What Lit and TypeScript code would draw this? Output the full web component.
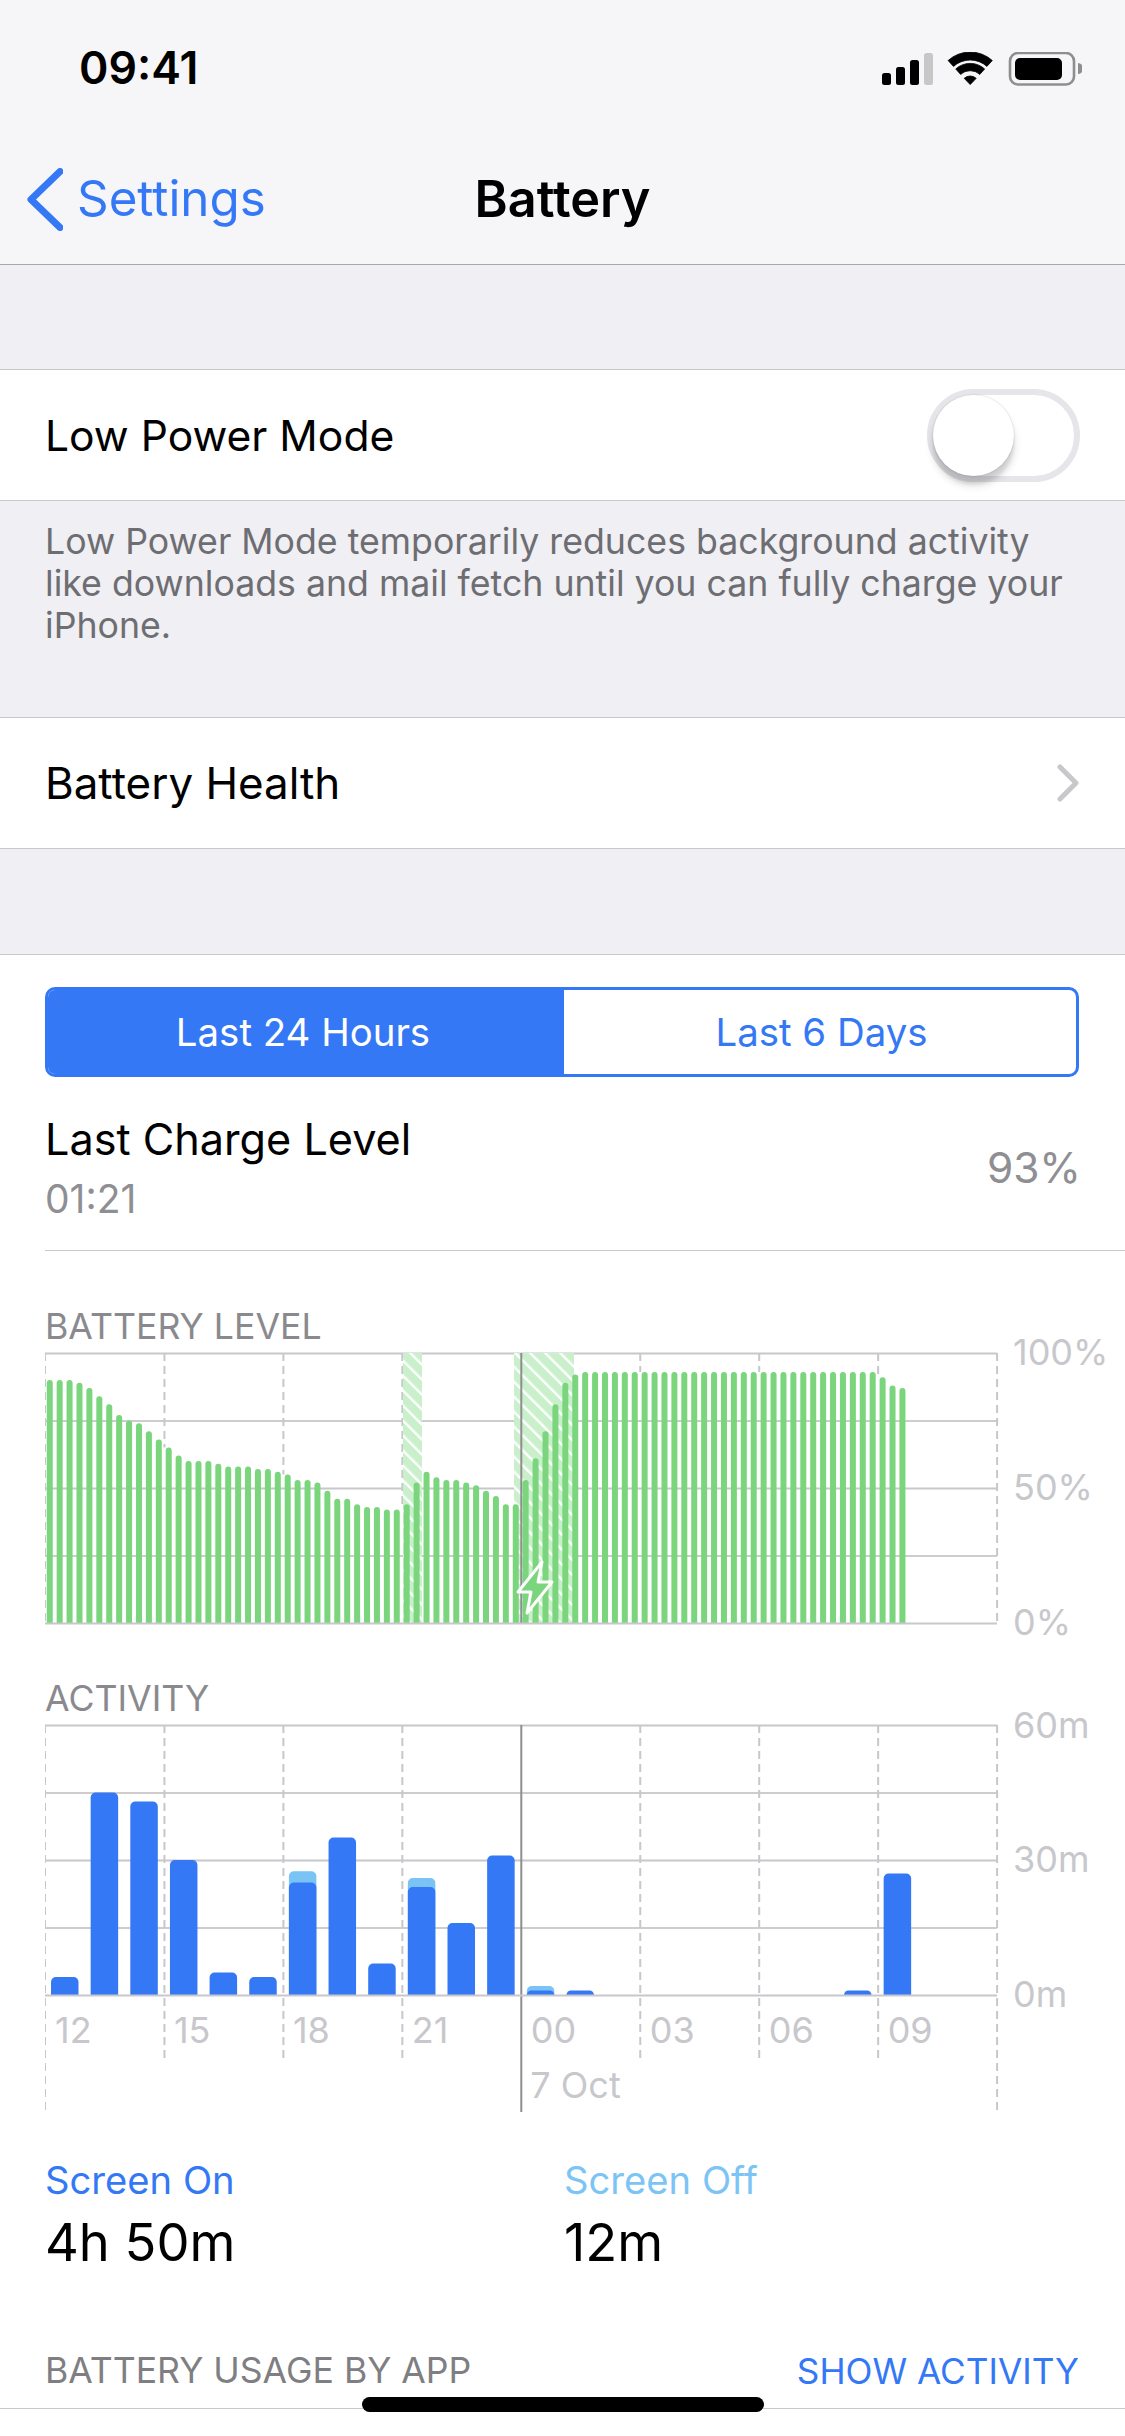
import { html, svg, css, LitElement } from "lit";
import { customElement } from "lit/decorators.js";

// battery percentage per 15 min slot, read off the graph
const LEVELS = [
  90, 90, 90, 89, 87, 84, 81, 77, 75, 74, 71, 68, 65, 62, 60, 60, 60, 59, 58, 58, 58, 57, 57, 56, 55, 53, 53, 52, 49,
  46, 46, 44, 43, 43, 42, 42, 44, 52, 56, 54, 53, 53, 52, 51, 49, 47, 44, 44, 53, 61, 71, 81, 89, 92,
  ...Array(30).fill(93),
  91, 88, 87,
];

// minutes per hour: [screen on, screen on + off]
const ACTIVITY: [number, number][] = [
  [4, 4], [45, 45], [43, 43], [30, 30], [5, 5], [4, 4], [25, 27.5], [35, 35], [7, 7], [24, 26], [16, 16], [31, 31],
  [1, 2], [1, 1], [0, 0], [0, 0], [0, 0], [0, 0], [0, 0], [0, 0], [1, 1], [27, 27],
];

const HOURS = ["12", "15", "18", "21", "00", "03", "06", "09"];
const LEFT = 45;
const RIGHT = 997;
const STEP = 118.95;
const GRID_X = Array.from({ length: 9 }, (_, i) => LEFT + 0.5 + i * STEP);
const LEVEL_BOTTOM = 1623;
const LEVEL_X = 46.75;
const LEVEL_STEP = 9.915;

// rounded-top column
const column = (x: number, w: number, top: number, bottom: number, r: number) => {
  const rr = Math.min(r, bottom - top);
  return `M${x} ${bottom}V${top + rr}A${rr} ${rr} 0 0 1 ${x + rr} ${top}H${x + w - rr}A${rr} ${rr} 0 0 1 ${x + w} ${top + rr}V${bottom}Z`;
};

// the hour guides of the level graph stop where the green columns begin
const levelGuideEnd = (x: number) => {
  const slot = Math.round((x - LEVEL_X - 3) / LEVEL_STEP);
  const level = LEVELS[slot];
  return level === undefined || slot < 1 ? LEVEL_BOTTOM : LEVEL_BOTTOM - level * 2.7;
};

@customElement("app-root")
export class AppRoot extends LitElement {
  static styles = css`
    :host {
      display: block;
      position: relative;
      height: 2436px;
      overflow: hidden;
      background: #fff;
      font-family: Inter, "Liberation Sans", sans-serif;
      color: #000;
    }

    .top {
      height: 264px;
      background: #f6f6f8;
      border-bottom: 1px solid #a9a9ab;
    }
    .status {
      display: flex;
      justify-content: space-between;
      padding: 42px 43px 0 79px;
      height: 125px;
      box-sizing: border-box;
    }
    .clock {
      font-size: 44.6px;
      line-height: 52px;
      font-weight: 600;
    }
    .status-icons {
      display: block;
      width: 200px;
      height: 34px;
      margin-top: 10px;
    }
    .nav {
      display: grid;
      grid-template-columns: 1fr auto 1fr;
      align-items: center;
      height: 64px;
      margin-top: 42px;
      padding-left: 27px;
      padding-right: 27px;
    }
    .back {
      display: flex;
      align-items: center;
      gap: 14px;
      color: #3478f6;
      font-size: 49.3px;
    }
    .back span,
    .title {
      position: relative;
      top: -1px;
    }
    .back svg {
      display: block;
      width: 36px;
      height: 63px;
    }
    .title {
      font-size: 50.4px;
      font-weight: 600;
    }

    .gap {
      height: 104px;
      background: #efeff4;
    }
    .row {
      display: flex;
      align-items: center;
      justify-content: space-between;
      box-sizing: border-box;
      height: 132px;
      padding: 0 45px;
      background: #fff;
      border-top: 1px solid #c8c7cc;
      border-bottom: 1px solid #c8c7cc;
      font-size: 42.6px;
    }
    .row .health {
      font-size: 43.9px;
    }
    .toggle {
      display: flex;
      box-sizing: border-box;
      width: 153px;
      height: 93px;
      border: 6px solid #e5e5ea;
      border-radius: 47px;
    }
    .knob {
      width: 81px;
      height: 81px;
      border-radius: 50%;
      background: #fff;
      box-shadow: 0 9px 9px rgba(0, 0, 0, 0.16), 0 9px 3px rgba(0, 0, 0, 0.06), 0 0 2px rgba(0, 0, 0, 0.2);
    }
    .disclosure {
      display: block;
      width: 23px;
      height: 38px;
    }
    .footnote {
      box-sizing: border-box;
      height: 216px;
      padding: 19px 30px 0 45px;
      background: #efeff4;
      color: #6d6d72;
      font-size: 35.7px;
      line-height: 42px;
    }
    .gap-2 {
      height: 105px;
      background: #efeff4;
    }

    .panel {
      border-top: 1px solid #c8c7cc;
      padding-top: 32px;
    }
    .segment {
      display: flex;
      box-sizing: border-box;
      height: 90px;
      margin: 0 46px 0 45px;
      border: 3px solid #3478f6;
      border-radius: 10px;
      color: #3478f6;
      font-size: 38.4px;
      overflow: hidden;
    }
    .segment div {
      display: flex;
      flex: 1;
      align-items: center;
      justify-content: center;
      padding-left: 3px;
    }
    .segment .on {
      box-sizing: border-box;
      flex: 0 0 516px;
      padding-left: 0;
      padding-right: 6px;
      background: #3478f6;
      color: #fff;
    }
    .charge {
      display: flex;
      align-items: center;
      justify-content: space-between;
      margin-left: 45px;
      margin-right: 44px;
      padding: 36px 0 28px;
    }
    .charge-name {
      font-size: 43.2px;
      line-height: 52px;
    }
    .charge-time {
      margin-top: 11px;
      color: #8e8e93;
      font-size: 39px;
      line-height: 46px;
    }
    .charge-value {
      color: #8e8e93;
      font-size: 42.4px;
    }
    .divider {
      height: 1px;
      margin-left: 45px;
      background: #c8c7cc;
    }

    .chart-title {
      padding-left: 45px;
      color: #8a8a8e;
      font-size: 35.7px;
      line-height: 42px;
    }
    .chart-title.first {
      margin-top: 55px;
      line-height: 41px;
    }
    .chart-title.second {
      margin-top: 27px;
    }
    .chart {
      display: block;
      width: 1125px;
      overflow: visible;
    }
    .chart text {
      fill: #c7c7cc;
      font-family: Inter, "Liberation Sans", sans-serif;
      font-size: 36px;
    }

    .totals {
      display: flex;
      margin-top: 42px;
      padding-left: 45px;
    }
    .total {
      flex: 0 0 519px;
    }
    .total-name {
      font-size: 38.2px;
      line-height: 46px;
      color: #3478f6;
    }
    .total-name.off {
      color: #7cc4f5;
    }
    .total-value {
      margin-top: 8px;
      font-size: 52.4px;
      line-height: 62px;
    }
    .usage {
      display: flex;
      justify-content: space-between;
      margin-top: 77px;
      padding: 0 46px 16px 45px;
      border-bottom: 1px solid #c8c7cc;
      color: #7f7f83;
      font-size: 35.6px;
      line-height: 42px;
    }
    .usage span:last-child {
      color: #3478f6;
      font-size: 35.2px;
    }
    .home {
      position: absolute;
      left: 362px;
      top: 2397px;
      width: 402px;
      height: 15px;
      border-radius: 8px;
      background: #000;
    }
  `;

  private gridLines(top: number, step: number) {
    return [0, 1, 2, 3].map((i) => {
      const y = top + i * step;
      return i % 2
        ? svg`<rect x=${LEFT} y=${y} width=${RIGHT - LEFT} height="1" fill="#9b9b9e"></rect>`
        : svg`<rect x=${LEFT} y=${y - 0.5} width=${RIGHT - LEFT} height="2" fill="#c8c8cc"></rect>`;
    });
  }

  private dash(x: number, top: number, end: number, width: number) {
    return svg`<line x1=${x} x2=${x} y1=${top} y2=${end} stroke="#c7c7cc" stroke-width=${width}
      stroke-dasharray="8 5"></line>`;
  }

  private midnight(top: number, end: number) {
    const x = GRID_X[4];
    return svg`<line x1=${x} x2=${x} y1=${top} y2=${end} stroke="#8e8e90" stroke-width="2"></line>`;
  }

  private batteryChart() {
    return html`<svg class="chart" height="303" viewBox="0 1347 1125 303">
      <defs>
        <pattern id="hatch" patternUnits="userSpaceOnUse" width="10.6" height="10.6" patternTransform="rotate(-45)">
          <rect width="10.6" height="10.6" fill="#c9f0cb"></rect>
          <rect width="2.4" height="10.6" fill="#fff"></rect>
        </pattern>
      </defs>
      ${this.gridLines(1353, 67.5)}
      ${GRID_X.map((x, i) => (i === 4 ? null : this.dash(x, 1353, levelGuideEnd(x), i === 0 ? 1 : 2)))}
      <rect x="403" y="1353" width="19" height="270" fill="url(#hatch)"></rect>
      <rect x="514" y="1353" width="60" height="270" fill="url(#hatch)"></rect>
      ${this.midnight(1353, LEVEL_BOTTOM)}
      ${LEVELS.map(
        (v, i) =>
          svg`<path fill="#7ad57d" d=${column(LEVEL_X + i * LEVEL_STEP, 6, LEVEL_BOTTOM - v * 2.7, LEVEL_BOTTOM, 3)}></path>`
      )}
      <rect x=${LEFT} y=${LEVEL_BOTTOM - 0.5} width=${RIGHT - LEFT} height="2" fill="#c8c8cc"></rect>
      <path d="M542 1562L518 1592H531L527 1613L552 1582H538Z" fill="#7ad57d" stroke="#fff" stroke-width="3"
        stroke-linejoin="round"></path>
      <text x="1013" y="1365">100%</text>
      <text x="1013" y="1500">50%</text>
      <text x="1013" y="1635">0%</text>
    </svg>`;
  }

  private activityChart() {
    const bottom = 1995;
    return html`<svg class="chart" height="396" viewBox="0 1719 1125 396">
      ${this.gridLines(1725, 67.5)}
      ${GRID_X.map((x, i) =>
        i === 4 ? null : this.dash(x, 1725, i === 0 || i === 8 ? 2112 : 2063, i === 0 ? 1 : 2)
      )}
      ${this.midnight(1725, 2112)}
      ${ACTIVITY.map(([on, total], i) => {
        if (!total) return null;
        const x = 51 + i * 39.65;
        return svg`
          ${total > on ? svg`<path fill="#7ac4f5" d=${column(x, 27.5, bottom - total * 4.5, bottom, 5)}></path>` : null}
          <path fill="#3478f6" d=${column(x, 27.5, bottom - on * 4.5, bottom, 5)}></path>`;
      })}
      <rect x=${LEFT} y=${bottom - 0.5} width=${RIGHT - LEFT} height="2" fill="#c8c8cc"></rect>
      ${HOURS.map((h, i) => svg`<text x=${GRID_X[i] + 9.5} y="2043">${h}</text>`)}
      <text x=${GRID_X[4] + 9} y="2098">7 Oct</text>
      <text x="1013" y="1738">60m</text>
      <text x="1013" y="1872">30m</text>
      <text x="1013" y="2007">0m</text>
    </svg>`;
  }

  render() {
    return html`
      <div class="top">
        <div class="status">
          <div class="clock">09:41</div>
          <svg class="status-icons" viewBox="882 52 200 34">
            <rect x="882" y="73" width="9" height="12" rx="2.5"></rect>
            <rect x="896" y="67" width="9" height="18" rx="2.5"></rect>
            <rect x="910" y="60" width="9" height="25" rx="2.5"></rect>
            <rect x="924" y="53" width="9" height="32" rx="2.5" fill="#c7c7c7"></rect>
            <g stroke="#000" stroke-width="0.8" stroke-linejoin="round">
              <path d="M948.1 60.5A33 33 0 0 1 992.3 60.5L986.9 66.4A25 25 0 0 0 953.5 66.4Z"></path>
              <path d="M955.75 68.95A21.6 21.6 0 0 1 984.65 68.95L979.8 74.4A14.3 14.3 0 0 0 960.6 74.4Z"></path>
              <path d="M964.2 78.3A9 9 0 0 1 976.2 78.3L970.2 84.6Z"></path>
            </g>
            <rect x="1010" y="53" width="64" height="31.5" rx="8" fill="none" stroke="#8e8e8e" stroke-width="2.6"></rect>
            <rect x="1015" y="58" width="47" height="22" rx="5"></rect>
            <path d="M1078 63A5 5.5 0 0 1 1078 74Z" fill="#8e8e8e"></path>
          </svg>
        </div>
        <div class="nav">
          <div class="back">
            <svg viewBox="0 0 36 63">
              <path d="M33 3.5L4 31.5L33 59.5" fill="none" stroke="#3478f6" stroke-width="7" stroke-linecap="round"
                stroke-linejoin="round"></path>
            </svg>
            <span>Settings</span>
          </div>
          <div class="title">Battery</div>
          <div></div>
        </div>
      </div>
      <div class="gap"></div>
      <div class="row">
        <span>Low Power Mode</span>
        <div class="toggle"><div class="knob"></div></div>
      </div>
      <div class="footnote">
        Low Power Mode temporarily reduces background activity<br />
        like downloads and mail fetch until you can fully charge your<br />
        iPhone.
      </div>
      <div class="row">
        <span class="health">Battery Health</span>
        <svg class="disclosure" viewBox="0 0 23 38">
          <path d="M3 3L19 19L3 35" fill="none" stroke="#c7c7cc" stroke-width="5" stroke-linecap="round"
            stroke-linejoin="round"></path>
        </svg>
      </div>
      <div class="gap-2"></div>
      <div class="panel">
        <div class="segment">
          <div class="on">Last 24 Hours</div>
          <div>Last 6 Days</div>
        </div>
        <div class="charge">
          <div>
            <div class="charge-name">Last Charge Level</div>
            <div class="charge-time">01:21</div>
          </div>
          <div class="charge-value">93%</div>
        </div>
        <div class="divider"></div>
        <div class="chart-title first">BATTERY LEVEL</div>
        ${this.batteryChart()}
        <div class="chart-title second">ACTIVITY</div>
        ${this.activityChart()}
        <div class="totals">
          <div class="total">
            <div class="total-name">Screen On</div>
            <div class="total-value">4h 50m</div>
          </div>
          <div class="total">
            <div class="total-name off">Screen Off</div>
            <div class="total-value">12m</div>
          </div>
        </div>
        <div class="usage">
          <span>BATTERY USAGE BY APP</span>
          <span>SHOW ACTIVITY</span>
        </div>
      </div>
      <div class="home"></div>
    `;
  }
}
